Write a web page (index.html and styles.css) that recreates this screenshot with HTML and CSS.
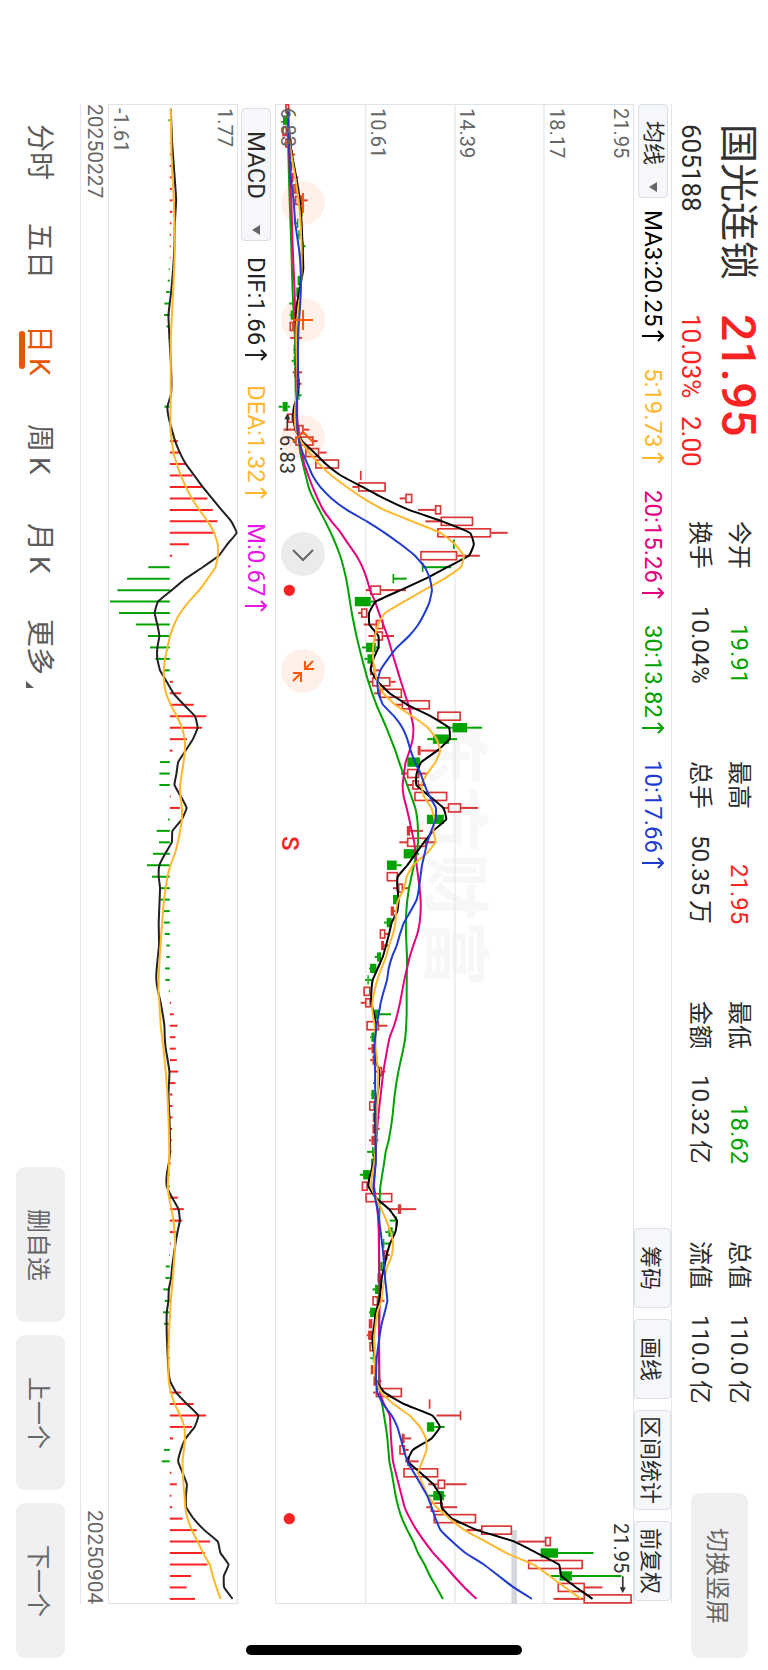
FILE: index.html
```html
<!DOCTYPE html>
<html lang="zh-CN">
<head>
<meta charset="utf-8">
<meta name="viewport" content="width=device-width, initial-scale=1">
<title>国光连锁 605188</title>
<link rel="stylesheet" href="styles.css">
</head>
<body>
<main class="screen">
  <header class="header">
    <div class="quote">
      <h1 class="name">国光连锁</h1>
      <strong class="price">21.95</strong>
      <span class="code">605188</span>
      <span class="change"><span>10.03%</span><span>2.00</span></span>
    </div>
    <div class="stats">
      <dl class="stat">
        <div class="pair"><dt>今开</dt><dd class="down">19.91</dd></div>
        <div class="pair"><dt>换手</dt><dd>10.04%</dd></div>
      </dl>
      <dl class="stat">
        <div class="pair"><dt>最高</dt><dd class="up">21.95</dd></div>
        <div class="pair"><dt>总手</dt><dd>50.35<span class="unit">万</span></dd></div>
      </dl>
      <dl class="stat">
        <div class="pair"><dt>最低</dt><dd class="down">18.62</dd></div>
        <div class="pair"><dt>金额</dt><dd>10.32<span class="unit">亿</span></dd></div>
      </dl>
      <dl class="stat">
        <div class="pair"><dt>总值</dt><dd>110.0<span class="unit">亿</span></dd></div>
        <div class="pair"><dt>流值</dt><dd>110.0<span class="unit">亿</span></dd></div>
      </dl>
    </div>
    <button class="pill switch" type="button">切换竖屏</button>
  </header>

  <section class="bar bar-ma">
    <div class="picker picker-ma">
      <select class="picker-select" aria-label="主图指标"><option>均线</option></select>
      <svg class="caret" viewBox="0 0 8 10"><path d="M8 0V10L0 5Z"/></svg>
    </div>
    <ul class="legend">
      <li class="c-black">MA3:20.25<svg class="arrow" viewBox="0 0 22 12"><path d="M0 6H21M16 1L21 6L16 11"/></svg></li>
      <li class="c-yellow">5:19.73<svg class="arrow" viewBox="0 0 22 12"><path d="M0 6H21M16 1L21 6L16 11"/></svg></li>
      <li class="c-pink">20:15.26<svg class="arrow" viewBox="0 0 22 12"><path d="M0 6H21M16 1L21 6L16 11"/></svg></li>
      <li class="c-green">30:13.82<svg class="arrow" viewBox="0 0 22 12"><path d="M0 6H21M16 1L21 6L16 11"/></svg></li>
      <li class="c-blue">10:17.66<svg class="arrow" viewBox="0 0 22 12"><path d="M0 6H21M16 1L21 6L16 11"/></svg></li>
    </ul>
    <div class="tools">
      <button class="tool" type="button">筹码</button>
      <button class="tool" type="button">画线</button>
      <button class="tool" type="button">区间统计</button>
      <button class="tool" type="button">前复权</button>
    </div>
  </section>

  <section class="chart chart-price">
    <span class="watermark">东方财富</span>
    <svg class="plot" id="price" viewBox="42 0 1080 4500" preserveAspectRatio="none"></svg>
    <span class="axis a0">6.83</span>
    <span class="axis a1">10.61</span>
    <span class="axis a2">14.39</span>
    <span class="axis a3">18.17</span>
    <span class="axis a4">21.95</span>
    <span class="mark mark-low">6.83</span>
    <span class="mark mark-high">21.95</span>
    <span class="sell">S</span>
    <div class="chart-tools">
      <button class="round" type="button" aria-label="缩小"><svg viewBox="0 0 44 44"><path d="M22 12V32"/></svg></button>
      <button class="round" type="button" aria-label="放大"><svg viewBox="0 0 44 44"><path d="M22 12V32M12 22H32"/></svg></button>
      <button class="round" type="button" aria-label="前移"><svg viewBox="0 0 44 44"><path d="M12 27L22 17L32 27"/></svg></button>
      <button class="round round-off" type="button" aria-label="后移"><svg viewBox="0 0 44 44"><path d="M12 18L22 28L32 18"/></svg></button>
      <button class="round" type="button" aria-label="收起"><svg viewBox="0 0 44 44"><path d="M32 12L24 20M24 12V20H33M12 32L20 24M20 33V24H12"/></svg></button>
    </div>
  </section>

  <section class="bar bar-macd">
    <div class="picker picker-macd">
      <select class="picker-select" aria-label="副图指标"><option>MACD</option></select>
      <svg class="caret" viewBox="0 0 8 10"><path d="M8 0V10L0 5Z"/></svg>
    </div>
    <ul class="legend">
      <li class="c-ink">DIF:1.66<svg class="arrow" viewBox="0 0 22 12"><path d="M0 6H21M16 1L21 6L16 11"/></svg></li>
      <li class="c-yellow">DEA:1.32<svg class="arrow" viewBox="0 0 22 12"><path d="M0 6H21M16 1L21 6L16 11"/></svg></li>
      <li class="c-violet">M:0.67<svg class="arrow" viewBox="0 0 22 12"><path d="M0 6H21M16 1L21 6L16 11"/></svg></li>
    </ul>
  </section>

  <section class="chart chart-macd">
    <svg class="plot" id="macd" viewBox="325 0 387 4500" preserveAspectRatio="none"></svg>
    <span class="axis a0">-1.61</span>
    <span class="axis a4">1.77</span>
  </section>

  <div class="dates"><time>20250227</time><time>20250904</time></div>

  <footer class="footer">
    <nav class="tabs">
      <a class="tab" href="#fs">分时</a>
      <a class="tab" href="#d5">五日</a>
      <a class="tab is-on" href="#dk">日<span class="latin">K</span></a>
      <a class="tab" href="#wk">周<span class="latin">K</span></a>
      <a class="tab" href="#mk">月<span class="latin">K</span></a>
      <a class="tab more" href="#more">更多</a>
    </nav>
    <div class="actions">
      <button class="pill" type="button">删自选</button>
      <button class="pill" type="button">上一个</button>
      <button class="pill" type="button">下一个</button>
    </div>
  </footer>
  <div class="home-bar"></div>
</main>
<script src="chart.js"></script>
</body>
</html>
```
FILE: styles.css
```css
* { box-sizing: border-box; }

body {
  margin: 0;
  background: #fff;
  color: #2b2b2b;
  font-family: Roboto, "Noto Sans CJK SC", sans-serif;
}

h1, dl, dd, ul { margin: 0; padding: 0; }
ul { list-style: none; }

button, select {
  writing-mode: vertical-rl;
  text-orientation: sideways;
  font-family: inherit;
  margin: 0;
  padding: 0;
  border: 0;
  color: inherit;
}

.screen {
  position: relative;
  display: flex;
  flex-direction: column;
  writing-mode: vertical-rl;
  text-orientation: sideways;
  width: 100vw;
  height: 100vh;
  min-height: 1600px;
  overflow: hidden;
  white-space: nowrap;
}

/* header */
.header {
  display: flex;
  align-items: center;
  block-size: 96px;
  padding-block-start: 2px;
  padding-inline: 124px 12px;
}
.quote {
  display: grid;
  grid-template-columns: 190px 207px;
  grid-template-rows: 48px 30px;
  row-gap: 8px;
  align-items: center;
}
.name { font-size: 39px; font-weight: 400; line-height: 48px; color: #333; }
.price { font-size: 48px; font-weight: 500; line-height: 48px; color: #f92323; }
.code { font-size: 26px; line-height: 30px; }
.change { display: flex; gap: 18px; font-size: 26px; line-height: 30px; color: #f92323; }

.stats { display: flex; gap: 77px; font-size: 24px; line-height: 39px; }
.stat { inline-size: 163px; }
.pair { display: flex; justify-content: space-between; }
.unit { margin-inline-start: 5px; }
.up { color: #f92323; }
.down { color: #00a200; }

.pill {
  inline-size: 155px;
  block-size: 49px;
  border-radius: 9px;
  background: #f0f0f2;
  color: #666;
  font-size: 24px;
}
.switch { inline-size: 165px; block-size: 57px; margin-inline-start: auto; }

/* indicator bars */
.bar {
  display: flex;
  align-items: center;
  margin-inline: 104px 66px;
  font-size: 24px;
}
.bar-ma { block-size: 38px; border-block-start: 1px solid #e3e5ea; }
.bar-macd { block-size: 37px; padding-inline-start: 4px; }

.picker {
  position: relative;
  block-size: 30px;
  border: 1px solid #dcdfe6;
  border-radius: 4px;
  background: #f6f7fa;
}
.picker-ma { inline-size: 94px; font-size: 22px; }
.picker-macd { inline-size: 133px; font-size: 24px; }
.picker-select {
  appearance: none;
  display: block;
  inline-size: 100%;
  block-size: 100%;
  padding-inline-start: 16px;
  background: none;
  font-size: inherit;
  line-height: 28px;
}
.picker-macd .picker-select { padding-inline-start: 22px; }
.caret {
  position: absolute;
  bottom: 5px;
  left: 10px;
  width: 8px;
  height: 10px;
  fill: #666;
}

.legend { display: flex; gap: 26px; padding-inline-start: 12px; line-height: 30px; }
.bar-macd .legend { gap: 24px; padding-inline-start: 16px; }
.legend li { display: flex; align-items: center; gap: 4px; }
.arrow { width: 22px; height: 12px; fill: none; stroke: currentColor; stroke-width: 2; }

.c-black { color: #000; }
.c-ink { color: #222; }
.c-yellow { color: #ffb82e; }
.c-pink { color: #e4007f; }
.c-green { color: #00a200; }
.c-blue { color: #1f3bd1; }
.c-violet { color: #e815e8; }

.tools { display: flex; gap: 11px; block-size: 100%; margin-inline: auto 3px; }
.tool {
  min-inline-size: 80px;
  block-size: 100%;
  padding-inline: 5px;
  border: 1px solid #dcdfe6;
  border-radius: 4px;
  background: #f6f7fa;
  font-size: 22px;
}

/* charts */
.chart { position: relative; margin-inline: 104px 66px; border: 1px solid #dfe2e8; }
.chart-price { flex: 360 1 0; }
.chart-macd { flex: 129 1 0; }
.plot { position: absolute; inset: -1px; width: calc(100% + 2px); height: calc(100% + 2px); }
.plot path, .plot line, .plot polyline { fill: none; }

.axis {
  position: absolute;
  top: 3px;
  padding-left: 2px;
  font-size: 20px;
  line-height: 22px;
  color: #666;
}
.a0 { left: -1px; }
.a1 { left: 25%; }
.a2 { left: 50%; }
.a3 { left: 75%; }
.a4 { right: 1px; }

.mark { position: absolute; font-size: 20px; line-height: 22px; color: #333; }
.mark-low { left: 0; top: 22%; }
.mark-high { right: 1px; bottom: 30px; }
.sell { position: absolute; left: 2px; top: 49%; margin-top: -3px; font-size: 24px; line-height: 24px; font-weight: 500; color: #f92323; }

.watermark {
  position: absolute;
  top: 41%;
  left: 136px;
  font-size: 67px;
  line-height: 84px;
  font-weight: 700;
  color: #f7f7f7;
}

.chart-tools { position: absolute; left: 5px; top: 76px; display: flex; gap: 73px; }
.round {
  width: 44px;
  height: 44px;
  border-radius: 50%;
  background: rgba(255, 96, 16, 0.09);
  color: #ff5a00;
}
.round-off { background: rgba(0, 0, 0, 0.08); color: #666; }
.round svg { display: block; width: 44px; height: 44px; fill: none; stroke: currentColor; stroke-width: 2; }

.dates {
  display: flex;
  justify-content: space-between;
  block-size: 28px;
  margin-inline: 104px 66px;
  border-block-end: 1px solid #e3e5ea;
  font-size: 21px;
  line-height: 26px;
  color: #666;
}

/* footer */
.footer {
  display: flex;
  align-items: center;
  justify-content: space-between;
  block-size: 80px;
  padding-inline: 103px 12px;
}
.tabs { display: flex; padding-block-start: 2px; }
.tab {
  position: relative;
  inline-size: 99px;
  text-align: center;
  font-size: 28px;
  line-height: 40px;
  color: #5c5c5c;
  text-decoration: none;
}
.latin { margin-inline-start: 5px; }
.is-on { color: #ea5504; }
.is-on::after {
  content: "";
  position: absolute;
  left: 0;
  top: 30px;
  width: 6px;
  height: 38px;
  border-radius: 3px;
  background: #ea5504;
}
.more::after {
  content: "";
  position: absolute;
  left: 7px;
  bottom: 9px;
  border-bottom: 7px solid #5c5c5c;
  border-right: 8px solid transparent;
}
.actions { display: flex; gap: 13px; }

.home-bar {
  position: absolute;
  left: 32%;
  right: 32%;
  bottom: 15px;
  height: 10px;
  border-radius: 5px;
  background: #000;
}
```
FILE: chart.js
```js
const RED = "#d93636", UP = "#f92323", GREEN = "#00a200", GRID = "#e5e7ed";
const FIRST = 14, STEP = 34.39;
const at = i => FIRST + STEP * i;

// [day, body low, body high, wick low, wick high, kind]
// kind: r hollow rise, s filled rise, g fall
const candles = [
[0,73,85,73,88,"r"],[1,66,79,66,85,"g"],[2,64,78,64,82,"r"],[3,73,92,70,92,"r"],[4,88,96,88,102,"s"],[5,90,94,88,100,"s"],[6,92,98,92,112,"s"],[7,97,107,94,115,"r"],[8,102,124,98,140,"r"],[9,115,125,115,128,"g"],[10,108,112,100,112,"g"],[11,112,116,110,125,"g"],[12,124,128,120,134,"g"],[13,118,124,118,126,"s"],[14,122,126,120,129,"g"],[15,110,120,110,122,"g"],[16,106,115,106,118,"g"],[17,95,99,85,99,"g"],[18,89,99,86,101,"g"],[19,86,98,86,104,"r"],[20,102,106,88,123,"s"],[21,98,103,96,104,"g"],[22,98,102,92,104,"g"],[23,100,108,95,123,"r"],[24,110,116,108,122,"s"],[25,112,116,110,122,"g"],[26,65,80,53,87,"g"],[27,80,96,78,100,"r"],[28,112,128,68,145,"r"],[29,103,158,103,170,"r"],[30,133,175,133,197,"r"],[31,163,235,163,235,"r"],[32,300,300,300,300,"r"],[33,292,375,275,375,"r"],[34,434,455,417,455,"r"],[35,523,542,472,542,"r"],[36,540,638,494,638,"r"],[37,530,692,530,742,"r"],[38,580,580,580,580,"g"],[39,479,590,479,658,"r"],[40,486,486,486,572,"g"],[41,398,398,398,438,"g"],[42,328,361,315,436,"r"],[43,282,330,282,345,"g"],[44,301,320,292,320,"r"],[45,345,368,309,368,"r"],[46,340,367,323,400,"r"],[47,316,345,304,358,"g"],[48,320,335,311,340,"g"],[49,328,343,328,358,"r"],[50,334,389,322,405,"r"],[51,356,424,340,424,"r"],[52,423,508,403,508,"r"],[53,530,601,530,601,"r"],[54,576,620,528,665,"g"],[55,517,565,500,590,"g"],[56,471,480,471,540,"s"],[57,440,478,440,478,"g"],[58,439,476,421,500,"r"],[59,455,475,440,496,"r"],[60,461,560,461,560,"r"],[61,562,602,550,653,"r"],[62,499,550,499,550,"g"],[63,439,448,439,487,"r"],[64,439,497,416,523,"r"],[65,429,465,429,475,"g"],[66,379,408,379,423,"g"],[67,378,412,378,412,"r"],[68,412,427,397,445,"r"],[69,397,412,397,412,"g"],[70,390,400,390,410,"s"],[71,378,393,370,393,"g"],[72,357,374,357,384,"r"],[73,361,370,361,384,"s"],[74,349,361,342,361,"g"],[75,328,347,325,347,"g"],[76,320,324,313,333,"g"],[77,308,329,308,329,"r"],[78,313,330,300,330,"r"],[79,340,355,340,391,"g"],[80,317,355,317,380,"r"],[81,332,340,328,340,"g"],[82,332,342,322,342,"s"],[83,335,350,328,350,"s"],[84,353,364,340,374,"r"],[85,341,345,337,345,"g"],[86,332,340,330,342,"g"],[87,325,342,325,342,"r"],[88,336,345,336,357,"s"],[89,335,345,335,357,"s"],[90,332,342,325,353,"s"],[91,334,339,319,345,"g"],[92,331,337,331,345,"g"],[93,307,327,297,327,"g"],[94,303,321,303,321,"r"],[95,314,395,314,395,"r"],[96,412,421,385,467,"r"],[97,404,408,387,410,"g"],[98,383,396,374,400,"g"],[99,367,371,360,388,"g"],[100,370,380,365,387,"r"],[101,359,366,357,368,"g"],[102,350,361,350,361,"s"],[103,343,352,335,355,"g"],[104,335,352,335,371,"r"],[105,328,345,325,345,"g"],[106,324,335,324,335,"s"],[107,322,334,318,336,"s"],[108,326,343,326,343,"r"],[109,336,338,329,340,"g"],[110,330,338,330,338,"s"],[111,338,347,338,362,"s"],[112,345,424,337,424,"r"],[113,507,507,507,507,"r"],[114,600,600,528,600,"r"],[115,499,521,499,552,"g"],[116,423,432,423,452,"s"],[117,416,433,416,444,"r"],[118,440,447,433,474,"r"],[119,428,533,428,533,"r"],[120,531,554,503,618,"r"],[121,518,550,503,555,"g"],[122,510,547,497,590,"r"],[123,519,647,519,647,"r"],[124,662,755,618,755,"r"],[125,854,872,772,872,"r"],[126,841,893,841,1000,"g"],[127,803,968,803,968,"r"],[128,898,935,872,1084,"g"],[129,892,974,892,1027,"r"],[130,970,1115,880,1115,"r"]
];

// averages as day:value points
const lines = {
  ma30: ["#00a200", "0:79 6:84 8:86 12:91 16:95 20:102 24:104 26:105 28:110 29:114 30:118 31:126 33:143 34:157 35:175 36:193 37:210 38:225 39:238 40:248 41:256 42:262 44:273 46:287 48:304 50:323 52:347 54:377 56:404 58:427 60:452 61:464 62:470 63:472 64:472 65:468 66:460 68:445 70:437 72:436 74:439 77:438 79:438 81:434 82:428 84:413 86:402 88:395 90:384 91:375 92:370 94:359 95:357 98:355 111:355 112:358 114:370 116:380 118:386 119:393 121:405 122:413 123:424 124:440 125:458 126:472 127:492 128:508 129:528 130:547"],
  ma20: ["#e4007f", "0:80 6:87 8:91 12:95 16:101 20:104 24:108 27:109 29:116 31:130 32:142 33:155 34:170 35:187 36:212 37:240 38:263 39:287 40:305 41:318 42:328 43:343 44:355 46:380 48:400 50:421 51:432 52:443 53:452 54:458 55:456 56:447 57:435 58:430 59:426 60:429 61:438 62:446 63:453 64:461 66:468 68:477 69:480 70:480 71:477 72:470 73:458 74:447 76:431 78:418 79:410 80:400 81:387 82:380 84:368 86:360 88:352 90:347 92:344 94:340 96:350 98:354 104:357 107:355 112:358 113:370 114:387 116:391 118:397 120:414 122:432 123:448 124:468 125:492 126:518 127:550 128:580 129:612 130:648"],
  ma3: ["#000", "0:80 3:88 4:93 6:106 8:117 10:122 12:125 14:127 15:121 16:115 17:108 18:105 19:108 21:108 24:113 25:110 26:99 27:97 28:103 29:124 30:160 31:195 32:240 33:305 34:370 35:445 36:545 37:628 38:640 39:625 40:560 41:495 42:420 43:345 44:325 45:326 46:353 47:353 48:338 49:330 50:352 51:387 52:440 53:510 54:565 55:567 56:530 57:482 58:468 59:467 60:508 61:548 62:557 63:518 64:490 65:465 66:440 67:411 68:410 69:414 70:410 71:393 72:385 73:376 74:366 75:351 76:336 77:332 78:332 79:340 80:345 82:342 83:345 84:355 85:355 86:350 87:343 90:345 91:343 92:338 93:328 94:323 95:345 96:385 97:409 98:404 99:388 100:378 101:371 102:363 103:360 104:355 105:345 106:341 107:336 108:336 109:343 111:346 112:372 113:430 114:515 115:538 116:513 117:457 118:441 119:480 120:518 121:540 122:543 123:575 124:650 125:762 126:830 127:896 128:903 129:948 130:997"],
  ma5: ["#ffb82e", "0:82 3:86 6:103 8:113 10:119 12:122 14:122 16:119 18:110 20:106 24:110 26:103 27:101 28:105 29:120 30:145 31:175 32:212 33:258 34:308 35:370 36:455 37:540 38:583 39:610 40:601 41:552 42:490 43:430 44:373 45:352 46:343 47:337 48:337 49:342 50:350 51:368 52:403 53:455 54:502 55:528 56:539 57:525 58:500 59:482 60:490 61:512 62:522 63:518 64:525 65:497 66:457 67:438 68:431 69:413 70:406 71:404 72:397 73:385 74:376 75:362 76:350 77:341 78:335 79:336 80:342 82:345 84:352 86:351 88:348 90:346 92:340 93:334 94:331 95:345 96:362 97:377 98:390 99:397 100:394 101:380 102:372 103:366 104:362 105:350 107:341 109:342 111:346 112:362 113:398 114:447 115:478 116:496 117:498 118:485 119:472 120:486 121:502 122:528 123:568 124:612 125:675 126:738 127:820 128:868 129:915 130:962"],
  ma10: ["#1f3bd1", "0:81 3:84 6:90 8:98 10:103 12:113 13:117 15:120 17:118 19:113 21:111 24:111 26:107 28:109 29:115 30:125 31:140 32:155 33:178 34:212 35:258 36:318 37:372 38:420 39:463 40:493 41:508 42:514 43:507 44:492 45:473 46:445 47:409 48:382 49:359 50:350 51:353 52:367 53:400 54:425 55:440 56:450 57:463 58:480 59:492 60:507 61:526 62:525 63:512 64:500 65:492 66:484 68:475 69:468 70:450 71:430 72:418 73:408 74:394 75:384 76:379 77:369 78:360 79:354 80:347 82:341 84:343 88:344 90:345 92:345 94:338 95:343 96:350 98:360 100:368 102:373 104:380 105:372 106:363 107:357 109:348 111:346 112:350 113:367 114:393 115:410 116:420 118:440 119:460 120:480 121:500 122:513 123:525 124:540 125:575 126:615 127:670 128:715 129:760 130:815"]
};
const dif = ["#222", "0:512 3:516 5:521 7:526 8:528 10:524 12:523 14:519 16:513 18:505 20:508 22:512 24:514 25:512 26:502 27:506 28:515 29:525 30:539 31:557 32:582 33:607 34:635 35:663 36:692 37:708 38:680 39:655 40:607 41:556 42:515 43:474 44:464 45:472 46:478 47:472 48:472 49:480 50:500 51:520 52:551 53:584 54:592 55:578 56:556 57:534 58:529 59:523 60:542 61:559 62:545 63:517 64:515 65:495 66:478 67:476 68:480 71:476 73:477 75:470 76:469 77:474 78:482 80:493 81:494 82:497 84:508 86:505 88:508 91:510 92:506 93:500 94:500 95:516 96:535 97:539 98:532 99:526 100:521 101:516 102:513 103:506 104:505 105:500 107:500 109:503 110:505 111:510 112:528 113:560 114:594 115:583 116:556 117:542 118:534 119:547 120:560 121:557 122:558 123:580 124:612 125:652 126:660 127:684 128:670 129:671 130:696"];
const dea = ["#ffb82e", "0:512 4:514 8:521 12:524 16:519 20:512 25:512 28:511 30:520 31:530 32:542 33:557 34:575 35:597 36:622 37:641 38:652 39:652 40:645 41:622 42:597 43:566 44:540 45:522 46:510 47:502 48:495 49:491 50:492 51:498 52:512 53:530 54:545 55:553 56:554 57:550 58:545 59:540 60:541 61:545 62:545 63:540 64:533 65:524 66:511 67:502 68:497 69:492 71:486 74:479 77:475 78:478 80:482 82:490 84:497 86:502 88:505 90:507 92:507 94:503 95:507 96:514 97:520 98:523 99:525 100:523 102:518 104:512 106:508 108:505 110:505 111:506 112:512 113:524 114:540 115:552 116:554 117:551 118:547 119:548 120:550 121:553 122:555 123:562 124:575 125:592 126:608 127:628 128:637 129:648 130:660"];
const hist = [0,-4,0,2,3,5,6,6,8,8,5,4,3,2,-3,-6,-11,-16,-17,-10,-4,0,0,0,0,0,-16,-4,3,24,33,50,68,95,112,128,142,135,57,7,-64,-127,-156,-178,-151,-101,-65,-59,-43,-18,9,34,71,109,96,51,8,-29,-31,-31,3,30,-5,-39,-32,-50,-68,-53,-28,-28,-18,-18,-15,-10,-10,-14,-13,-3,4,12,23,17,18,21,25,17,8,8,8,7,6,5,3,-3,-4,24,42,37,20,3,-2,-12,-13,-19,-15,-20,-17,-5,-4,-3,0,3,34,71,108,66,10,-17,-24,5,21,5,7,38,80,120,104,112,63,50,75];
const ZERO = 509;

// Catmull-Rom curve through the day points, with short handles
function curve([color, text]) {
  const p = text.split(" ").map(s => { const [i, v] = s.split(":").map(Number); return [v, at(i)]; });
  let d = `M${p[0]}`;
  for (let k = 0; k < p.length - 1; k++) {
    const a = p[k - 1] || p[k], b = p[k], c = p[k + 1], e = p[k + 2] || c;
    const h = (c[1] - b[1]) / 9;
    const s1 = (c[0] - a[0]) / (c[1] - a[1]), s2 = (e[0] - b[0]) / (e[1] - b[1]);
    d += `C${b[0] + s1 * h},${b[1] + h} ${c[0] - s2 * h},${c[1] - h} ${c[0]},${c[1]}`;
  }
  return `<path d="${d}" stroke="${color}" stroke-width="6"/>`;
}

function candle([i, lo, hi, wlo, whi, kind]) {
  const y = at(i), c = kind === "g" ? GREEN : RED;
  let s = "";
  if (wlo < lo) s += `<path d="M${wlo} ${y}H${lo}" stroke="${c}" stroke-width="6"/>`;
  if (whi > hi) s += `<path d="M${hi} ${y}H${whi}" stroke="${c}" stroke-width="6"/>`;
  if (lo === hi) return s + `<path d="M${lo} ${y - 14}V${y + 14}" stroke="${c}" stroke-width="5"/>`;
  const fill = kind === "r" ? "none" : c, n = kind === "r" ? 2 : 0;
  return s + `<rect x="${lo + n}" y="${y - 14 + n}" width="${hi - lo - 2 * n}" height="${28 - 2 * n}" fill="${fill}" stroke="${kind === "r" ? c : "none"}" stroke-width="5"/>`;
}

const grid = [315, 583, 851].map(x => `<path d="M${x} 0V4500" stroke="${GRID}" stroke-width="4"/>`).join("");

document.getElementById("price").innerHTML =
  grid +
  `<rect x="753" y="4278" width="17" height="222" fill="#d4d8dd"/>` +
  candles.map(candle).join("") +
  Object.values(lines).map(curve).join("") +
  `<circle cx="85" cy="1459" r="17" fill="${UP}"/><circle cx="85" cy="4244" r="17" fill="${UP}"/>` +
  `<path d="M79 980V940" stroke="#333" stroke-width="5"/><polygon points="79,928 70,946 88,946" fill="#333"/>` +
  `<path d="M1088 4417V4456" stroke="#333" stroke-width="5"/><polygon points="1088,4468 1079,4450 1097,4450" fill="#333"/>`;

document.getElementById("macd").innerHTML =
  hist.map((v, i) => v ? `<path d="M${ZERO} ${at(i)}H${ZERO + v}" stroke="${v > 0 ? UP : GREEN}" stroke-width="6"/>` : "").join("") +
  curve(dif) + curve(dea);
```
